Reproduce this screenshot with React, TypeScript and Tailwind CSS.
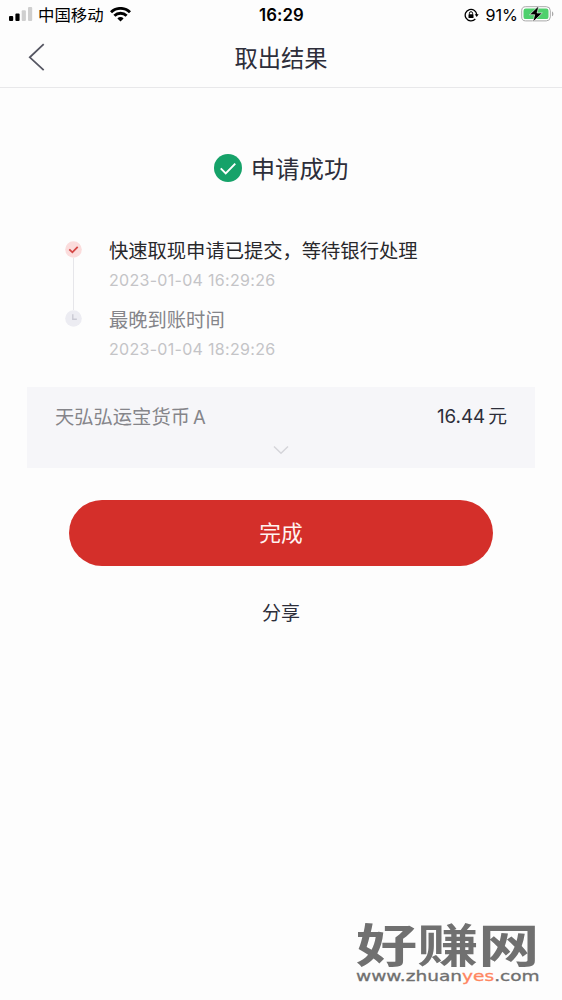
import type { ReactNode } from "react";

type Step = {
  title: string;
  time: string;
  done: boolean;
};

const steps: Step[] = [
  { title: "快速取现申请已提交，等待银行处理", time: "2023-01-04 16:29:26", done: true },
  { title: "最晚到账时间", time: "2023-01-04 18:29:26", done: false },
];

const StatusBar = () => {
  return (
    <div className="grid h-7 grid-cols-3 items-center pl-[9px] pr-2 text-black">
      <div className="flex items-center">
        <svg className="-mt-px" width="24" height="14" viewBox="0 0 24 14">
          <rect x="0" y="9" width="4.2" height="5" rx="1" />
          <rect x="6.4" y="6.5" width="4.2" height="7.5" rx="1" />
          <rect x="12.7" y="3.3" width="4.2" height="10.7" rx="1" fill="#cfcfcf" />
          <rect x="19" y="0" width="4.2" height="14" rx="1" fill="#cfcfcf" />
        </svg>
        <span className="ml-[5px] mt-px whitespace-nowrap text-[16.4px] leading-7">中国移动</span>
        <svg className="-mt-px ml-1.5" width="21" height="15" viewBox="0 0 21 15" fill="none" stroke="#000" strokeWidth="2.9">
          <path d="M1 5.3a13.5 13.5 0 0 1 19 0" />
          <path d="M4.4 8.8a8.6 8.6 0 0 1 12.2 0" />
          <path d="M10.5 14.5 7.4 11.4a4.4 4.4 0 0 1 6.2 0z" fill="#000" stroke="none" />
        </svg>
      </div>
      <div className="mt-px text-center text-[16.8px] font-semibold leading-7 tracking-[0.1px]">16:29</div>
      <div className="flex items-center justify-end">
        <svg width="15" height="14" viewBox="0 0 15 14" fill="none" stroke="#000" strokeWidth="1.3">
          <path d="M11.3 11a5.8 5.8 0 1 1 1.5-4" />
          <path d="M10.7 6.3h4l-2 2.6z" fill="#000" stroke="none" />
          <rect x="4.5" y="6.3" width="5" height="3.8" rx="0.6" fill="#000" stroke="none" />
          <path d="M5.4 6.6V5.3a1.6 1.6 0 0 1 3.2 0v1.3" strokeWidth="1" />
        </svg>
        <span className="ml-[6px] mt-px text-[16.2px] leading-7">91%</span>
        <svg className="-mt-px ml-[3px]" width="33" height="18" viewBox="0 0 33 18">
          <rect x="0.7" y="1.7" width="28.6" height="14.2" rx="4" fill="#fff" stroke="#a9a9a9" />
          <rect x="2.5" y="3.5" width="25" height="10.6" rx="2.2" fill="#4fd06d" />
          <path d="M31 6.4c1.8.5 1.8 4.3 0 4.8z" fill="#a9a9a9" />
          <path d="M17.8.8 8.5 9.7h5.2L11.9 17l9.4-9h-5.2z" fill="#000" stroke="#fff" strokeWidth="0.6" />
        </svg>
      </div>
    </div>
  );
};

const StepIcon = ({ done }: { done: boolean }) => {
  return (
    <svg className="shrink-0" width="17" height="17" viewBox="0 0 17 17" fill="none">
      <circle cx="8.5" cy="8.5" r="8.3" fill={done ? "#fbdcdc" : "#ececf2"} />
      {done ? (
        <path d="m4.3 8.3 3.1 3 5.3-5.4" stroke="#d44745" strokeWidth="1.8" />
      ) : (
        <path d="M7.8 4.3v5h4" stroke="#c9c9d3" strokeWidth="1.4" />
      )}
    </svg>
  );
};

const Row = ({ children }: { children: ReactNode }) => {
  return <div className="flex items-center justify-between leading-7">{children}</div>;
};

const Watermark = () => {
  return (
    <div className="absolute left-[356px] top-[921px] w-[184px] text-[#707070]">
      <div className="h-[48px] origin-left scale-x-[1.33] whitespace-nowrap text-[46px] font-bold leading-[48px]">
        好赚网
      </div>
      <div className="flex h-[17px] origin-left scale-x-[1.325] whitespace-nowrap font-['DejaVu_Sans'] text-[14px] leading-[15px] [-webkit-text-stroke:0.3px]">
        <span>www.zhuan</span>
        <span className="text-[#ff8661]">yes</span>
        <span>.com</span>
      </div>
    </div>
  );
};

const App = () => {
  return (
    <main className="relative h-[1000px] w-[562px] overflow-hidden bg-[#fdfdfd] font-[Inter,'Noto_Sans_CJK_SC',sans-serif] text-[#2d2e3a]">
      <StatusBar />

      <header className="grid h-[60px] grid-cols-3 items-center border-b border-[#e8e8ea] px-[28px]">
        <svg className="-mt-px" width="18" height="28" viewBox="0 0 18 28" fill="none" stroke="#555662" strokeWidth="1.8">
          <path d="M15.7 1.2 1.8 14.3l13.9 12.9" />
        </svg>
        <h1 className="mt-0.5 text-center text-[23.3px] leading-8">取出结果</h1>
      </header>

      <section className="mt-[62px] flex h-9 items-center justify-center gap-[9px]">
        <svg width="28" height="28" viewBox="0 0 27 27" fill="none">
          <circle cx="13.5" cy="13.5" r="13.5" fill="#16a269" />
          <path d="m6.5 13.9 4.8 4.8 9.2-9.4" stroke="#fff" strokeWidth="1.9" />
        </svg>
        <h2 className="mt-0.5 text-[24.4px] leading-9">申请成功</h2>
      </section>

      <section className="relative mt-[51px] pl-[65px]">
        <div className="absolute left-[73px] top-[21px] h-[52px] w-px bg-[#e6e6ea]" />
        {steps.map((step) => (
          <div key={step.time} className="flex h-[69px] gap-[27px]">
            <div className="pt-1">
              <StepIcon done={step.done} />
            </div>
            <div>
              <p
                className={`whitespace-nowrap text-[19.3px] leading-7 ${
                  step.done ? "text-[#28282c]" : "text-[#85858a]"
                }`}
              >
                {step.title}
              </p>
              <p className="mt-px text-[16px] leading-7 tracking-[0.3px] text-[#c4c4c7]">{step.time}</p>
            </div>
          </div>
        ))}
      </section>

      <section className="mx-[27px] mt-[12px] h-[81px] bg-[#f6f6f9] px-[28px] pt-[16px] text-[19.3px]">
        <Row>
          <span className="flex gap-[3px] text-[#85858a]">
            <span>天弘弘运宝货币</span>
            <span className="text-[18.5px]">A</span>
          </span>
          <span className="flex gap-[3px]">
            <span className="text-[18.8px]">16.44</span>
            <span className="text-[18.8px]">元</span>
          </span>
        </Row>
        <svg className="mx-auto mt-[14px]" width="16" height="10" viewBox="0 0 16 10" fill="none" stroke="#d5d5da" strokeWidth="1.5">
          <path d="m1 1.5 7 6.7 7-6.7" />
        </svg>
      </section>

      <div className="flex flex-col items-center">
        <button className="mt-[32px] h-[66px] w-[424px] rounded-full bg-[#d42f2a] text-[21.7px] text-[#fff3f1]">
          完成
        </button>
        <button className="mt-[34px] text-[19px] leading-7">分享</button>
      </div>

      <Watermark />
    </main>
  );
};

export default App;
